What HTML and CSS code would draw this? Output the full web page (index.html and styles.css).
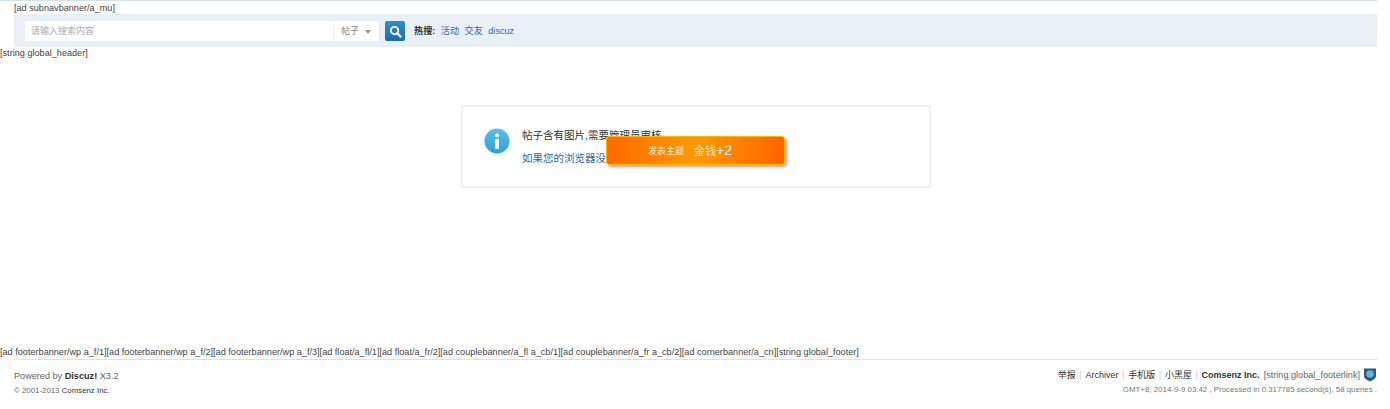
FILE: index.html
```html
<!DOCTYPE html>
<html lang="en">
<head>
  <meta charset="UTF-8" />
  <title>提示信息</title>
  <link rel="stylesheet" href="styles.css">
</head>
<body>
  <div class="page">
    <div class="ad-line">[ad subnavbanner/a_mu]</div>

    <div class="search-bar">
      <div class="search-box">
        <div class="search-input">请输入搜索内容</div>
        <div class="search-type">帖子<span class="caret"></span></div>
      </div>
      <div class="search-btn">
        <svg width="13" height="13" viewBox="0 0 14 14"><circle cx="6" cy="6" r="4" fill="none" stroke="#fff" stroke-width="2"/><path d="M9 9l3.500 3.500" stroke="#fff" stroke-width="2.400" stroke-linecap="round"/></svg>
      </div>
      <div class="hot">
        <strong>热搜:</strong>
        <a>活动</a>
        <a>交友</a>
        <a>discuz</a>
      </div>
    </div>

    <div class="header-str">[string global_header]</div>

    <div class="main">
      <div class="message">
        <svg class="info-icon" width="26" height="26" viewBox="0 0 26 26">
          <defs>
            <linearGradient id="infoFill" x1="0" y1="0" x2="0" y2="1">
              <stop offset="0" stop-color="#5cc0ec"/>
              <stop offset="1" stop-color="#2a9fdc"/>
            </linearGradient>
          </defs>
          <circle cx="13" cy="13" r="12.500" fill="url(#infoFill)"/>
          <circle cx="13" cy="7.500" r="2" fill="#fff"/>
          <rect x="11" y="11" width="4" height="10" rx="1" fill="#fff"/>
        </svg>
        <div class="message-text">
          <p>帖子含有图片,需要管理员审核</p>
          <p><a>如果您的浏览器没有自动跳转,请点击此处</a></p>
        </div>
        <div class="credit-toast"><span class="toast-title">发表主题</span><span class="toast-credit">金钱<b>+2</b></span></div>
      </div>
    </div>

    <div class="footer-str">[ad footerbanner/wp a_f/1][ad footerbanner/wp a_f/2][ad footerbanner/wp a_f/3][ad float/a_fl/1][ad float/a_fr/2][ad couplebanner/a_fl a_cb/1][ad couplebanner/a_fr a_cb/2][ad cornerbanner/a_cn][string global_footer]</div>

    <div class="footer">
      <div class="footer-left">
        <p class="powered">Powered by <strong>Discuz!</strong> X3.2</p>
        <p class="copy">© 2001-2013 <a>Comsenz Inc.</a></p>
      </div>
      <div class="footer-right">
        <p class="links">
          <a>举报</a><span class="pipe">|</span><a>Archiver</a><span class="pipe">|</span><a>手机版</a><span class="pipe">|</span><a>小黑屋</a><span class="pipe">|</span><strong>Comsenz Inc.</strong>
          <span class="footer-link">[string global_footerlink]</span>
          <svg class="shield" width="14" height="15" viewBox="0 0 14 15"><path d="M1 1.500h12v7.500c0 2.500-3.500 4.500-6 5.500-2.500-1-6-3-6-5.500z" fill="#2f5a78"/><circle cx="7" cy="7" r="3.800" fill="#5ab4e6"/></svg>
        </p>
        <p class="stats">GMT+8, 2014-9-9 03:42 , Processed in 0.317785 second(s), 58 queries .</p>
      </div>
    </div>
  </div>
</body>
</html>
```

FILE: styles.css
```css
* {
  box-sizing: border-box;
}

body {
  margin: 0;
  background: #fff;
  color: #444;
  font: 9.150px "Liberation Sans", "Noto Sans CJK SC", sans-serif;
}

p {
  margin: 0;
}

.page {
  width: 1377px;
  height: 409px;
  display: flex;
  flex-direction: column;
  border-top: 1px solid #d5dfe8;
}

.ad-line {
  height: 13px;
  padding-left: 14px;
  line-height: 14px;
}

.search-bar {
  margin-left: 14px;
  height: 33px;
  padding: 7px 11px;
  display: flex;
  align-items: flex-start;
  background: #e8eff5;
}

.search-box {
  width: 354px;
  height: 20px;
  display: flex;
  background: #fff;
  line-height: 21px;
  font-size: 9px;
}

.search-input {
  flex: 1;
  padding-left: 6px;
  color: #aaa;
}

.search-type {
  width: 46px;
  padding-left: 7px;
  border-left: 1px solid #e8eff5;
  color: #888;
  display: flex;
  align-items: center;
}

.caret {
  margin: 1px 0 0 6px;
  border: 3px solid transparent;
  border-top: 4px solid #999;
  border-bottom: 0;
}

.search-btn {
  width: 20px;
  height: 20px;
  margin-left: 6px;
  display: flex;
  align-items: center;
  justify-content: center;
  border-radius: 2px;
  background: linear-gradient(#2f8fcd, #1a6cab);
}

.hot {
  margin-left: 9px;
  line-height: 20px;
  font-size: 9.150px;
  display: flex;
  gap: 5.500px;
  color: #333;
}

.hot a {
  color: #36689c;
}

.header-str {
  height: 14px;
  line-height: 13px;
}

.main {
  flex: 1;
  padding-top: 44px;
  display: flex;
  justify-content: center;
}

.message {
  position: relative;
  width: 470px;
  height: 83px;
  padding: 17px 21px;
  margin-left: 15px;
  display: flex;
  gap: 12px;
  border: 2px solid #f0f0f0;
  font-size: 10.500px;
}

.info-icon {
  flex: none;
  margin-top: 4px;
}

.message-text {
  color: #333;
  line-height: 23px;
}

.message-text a {
  color: #369;
}

.credit-toast {
  position: absolute;
  left: 143px;
  top: 29px;
  width: 179px;
  height: 29px;
  padding: 0 11px 1px 0;
  display: flex;
  align-items: center;
  justify-content: center;
  gap: 10px;
  border: 1px solid #ffb400;
  border-radius: 3px;
  background: linear-gradient(90deg, #ff6a00, #ff9a00 50%, #ff6400);
  box-shadow: 2px 2px 3px rgba(0, 0, 0, 0.35);
}

.toast-title {
  font-size: 9px;
  color: #ffecd2;
}

.toast-credit {
  font-size: 11px;
  color: #ffecd2;
}

.toast-credit b {
  font-weight: normal;
  font-size: 14px;
  color: #fff;
}

.footer-str {
  height: 13px;
  line-height: 13px;
}

.footer {
  height: 50px;
  margin-left: 14px;
  padding-top: 9px;
  display: flex;
  justify-content: space-between;
  border-top: 1px solid #e0e0e0;
}

.powered {
  line-height: 14px;
  color: #666;
}

.powered strong {
  color: #333;
}

.copy {
  margin-top: 1px;
  line-height: 14px;
  font-size: 7.850px;
  color: #666;
}

.copy a {
  color: #333;
}

.footer-right {
  margin-top: -1px;
  text-align: right;
}

.links {
  line-height: 14px;
  color: #333;
  font-size: 9px;
  display: flex;
  align-items: center;
  justify-content: flex-end;
}

.pipe {
  margin: 0 3.700px;
  color: #ccc;
}

.footer-link {
  margin: 0 3px 0 4px;
  font-size: 9.150px;
  color: #666;
}

.shield {
  margin-top: -1px;
}

.stats {
  margin-top: 1px;
  line-height: 14px;
  font-size: 7.900px;
  color: #777;
}
```
